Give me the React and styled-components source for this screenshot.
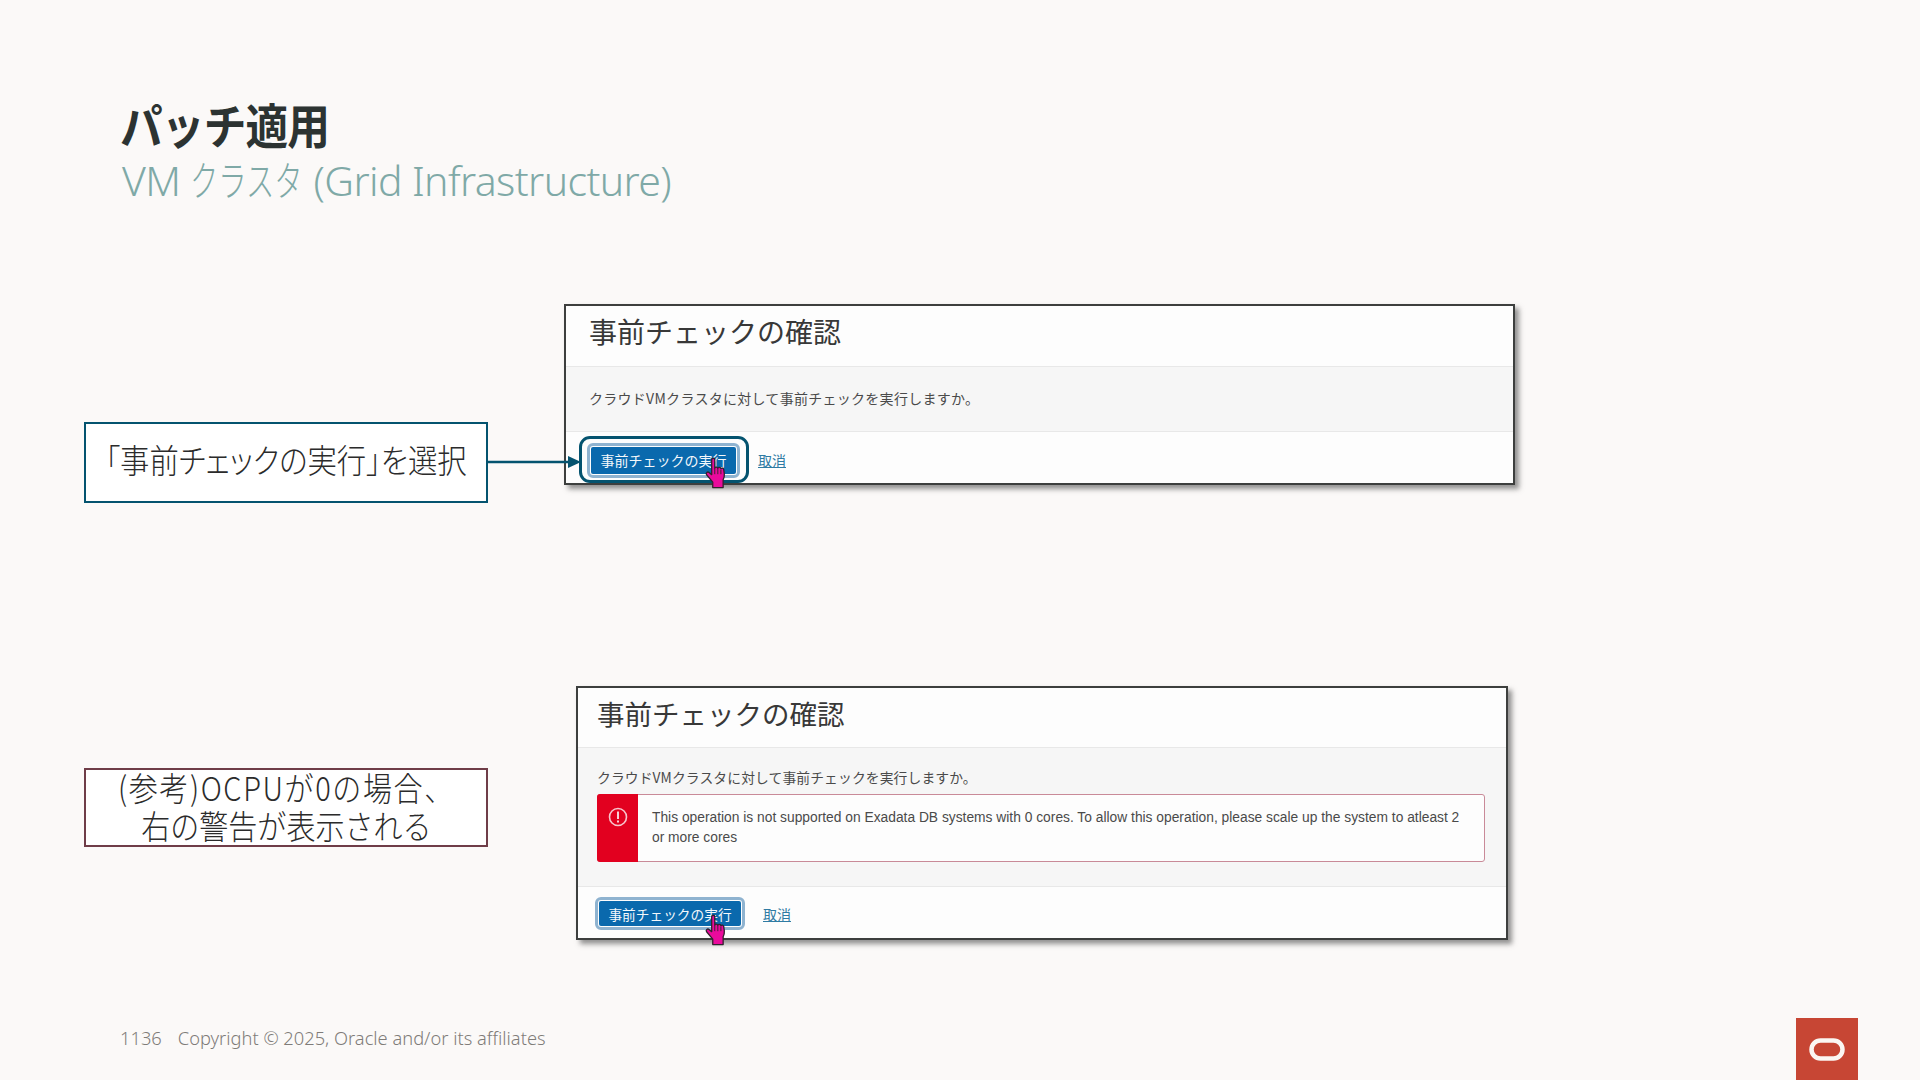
import React from "react";
import styled, { createGlobalStyle } from "styled-components";

const GlobalStyle = createGlobalStyle`
  html, body {
    margin: 0;
    padding: 0;
    background: #fbf9f8;
  }
`;

const Slide = styled.div`
  width: 1920px;
  height: 1080px;
  box-sizing: border-box;
  padding: 93px 0 0 84px;
  position: relative;
  overflow: hidden;
  display: flex;
  flex-direction: column;
  background: #fbf9f8;
  font-family: "Noto Sans", "Noto Sans CJK JP", sans-serif;
`;

const Header = styled.header`
  padding-left: 36px;
  height: 211px;
`;

const Title = styled.h1`
  margin: 0;
  font-family: "Noto Sans CJK JP", sans-serif;
  font-size: 48px;
  line-height: 60px;
  font-weight: 700;
  letter-spacing: -1px;
  color: #2c3332;
  white-space: nowrap;
  transform: scaleX(0.89);
  transform-origin: left center;
`;

const Subtitle = styled.h2`
  margin: 0 0 0 2px;
  font-family: "Noto Sans", "Noto Sans CJK JP", sans-serif;
  font-size: 41px;
  line-height: 50px;
  font-weight: 300;
  letter-spacing: -0.6px;
  color: #7fa9a7;
`;

const NarrowKana = styled.span`
  display: inline-block;
  width: 113px;
  font-family: "Noto Sans CJK JP", sans-serif;
  font-size: 41px;
  letter-spacing: 0;
  white-space: nowrap;
  transform: scaleX(0.69);
  transform-origin: left center;
`;

const Row = styled.section`
  display: grid;
  grid-template-columns: 404px ${(p) => p.$dialogWidth}px;
  column-gap: ${(p) => p.$gap}px;
  align-items: start;
  margin-bottom: ${(p) => p.$after}px;
`;

const Callout = styled.div`
  position: relative;
  box-sizing: border-box;
  height: ${(p) => p.$height}px;
  margin-top: ${(p) => p.$top}px;
  display: flex;
  align-items: center;
  justify-content: center;
  text-align: center;
  background: #ffffff;
  border: 2px solid ${(p) => p.$color};
`;

const CalloutText = styled.span`
  display: block;
  white-space: nowrap;
  font-family: "Noto Sans CJK JP", sans-serif;
  font-feature-settings: ${(p) => (p.$tight ? '"palt"' : "normal")};
  font-size: 33px;
  line-height: 38px;
  font-weight: 300;
  color: #2b2b2b;
  margin-bottom: ${(p) => p.$lift}px;
  transform: scaleX(${(p) => p.$scale});
`;

const WideLine = styled.span`
  letter-spacing: 1.8px;
`;

const Arrow = styled.svg`
  position: absolute;
  left: 100%;
  top: 50%;
  margin-top: -9px;
  display: block;
`;

const Dialog = styled.div`
  box-sizing: border-box;
  display: flex;
  flex-direction: column;
  height: ${(p) => p.$height}px;
  background: #fdfdfd;
  border: 2px solid #3d3f3e;
  box-shadow: 4px 4px 5px rgba(60, 60, 60, 0.55);
`;

const DialogHead = styled.div`
  box-sizing: border-box;
  height: ${(p) => p.$height}px;
  padding: 0 0 10px ${(p) => p.$inset}px;
  display: flex;
  align-items: center;
  font-family: "Noto Sans CJK JP", sans-serif;
  font-size: ${(p) => p.$size}px;
  color: #383838;
  border-bottom: 1px solid #e8e8e8;
`;

const DialogBody = styled.div`
  box-sizing: border-box;
  flex: 1;
  padding: ${(p) => p.$pad}px ${(p) => p.$inset + 2}px 0 ${(p) => p.$inset}px;
  background: #f6f6f6;
  font-family: "Noto Sans CJK JP", sans-serif;
  font-size: ${(p) => p.$size}px;
  line-height: 20px;
  color: #4a4a4a;
  letter-spacing: ${(p) => p.$spacing}px;
`;

const DialogFoot = styled.div`
  box-sizing: border-box;
  height: ${(p) => p.$height}px;
  padding: ${(p) => p.$top}px 0 0 ${(p) => p.$inset}px;
  border-top: 1px solid #e8e8e8;
  display: flex;
  align-items: center;
  gap: 20px;
`;

const ButtonWrap = styled.div`
  position: relative;
  display: flex;
`;

const RunButton = styled.button`
  box-sizing: border-box;
  width: ${(p) => p.$width}px;
  height: ${(p) => p.$height}px;
  padding: 0;
  background: #0a69ad;
  border: 2px solid #fdfdfd;
  border-radius: 4px;
  outline: 3px solid #8fb3d0;
  outline-offset: -1px;
  font-family: "Noto Sans CJK JP", sans-serif;
  font-size: ${(p) => p.$size}px;
  color: #f4f8fb;
`;

const Ring = styled.div`
  position: absolute;
  left: -10px;
  right: -11px;
  top: -9px;
  bottom: -7px;
  border: 3px solid #04536f;
  border-radius: 11px;
`;

const Hand = styled.svg`
  position: absolute;
  left: ${(p) => p.$left}px;
  top: ${(p) => p.$top}px;
  display: block;
`;

const CancelLink = styled.a`
  font-family: "Noto Sans CJK JP", sans-serif;
  font-size: 14px;
  color: #2f7ba3;
  text-decoration: underline;
`;

const Alert = styled.div`
  display: flex;
  box-sizing: border-box;
  height: 68px;
  margin-top: 7px;
  background: #fdfdfd;
  border: 1px solid #c98a98;
  border-radius: 3px;
`;

const AlertBand = styled.div`
  width: 41px;
  flex: none;
  margin: -1px 0 -1px -1px;
  background: #e2001f;
  border-radius: 3px 0 0 3px;
  display: flex;
  justify-content: center;
  padding-top: 13px;
  box-sizing: border-box;
`;

const AlertText = styled.div`
  padding: 13px 20px 0 14px;
  font-family: "Liberation Sans", Arial, sans-serif;
  font-size: 13.8px;
  line-height: 20px;
  letter-spacing: 0;
  color: #4a4a4a;
`;

const Footer = styled.footer`
  position: absolute;
  left: 120px;
  bottom: 30px;
  display: flex;
  gap: 16px;
  font-family: "Noto Sans", sans-serif;
  font-size: 18.3px;
  font-weight: 300;
  line-height: 24px;
  color: #7f7c79;
`;

const Logo = styled.div`
  position: absolute;
  right: 62px;
  bottom: 0;
  width: 62px;
  height: 62px;
  background: #c74634;
  display: flex;
  justify-content: center;
  padding-top: 20px;
  box-sizing: border-box;
`;

const HandIcon = ({ left, top }) => (
  <Hand $left={left} $top={top} width="26" height="32" viewBox="0 0 22 27">
    <path
      d="M6.500 2.200c0-1.600 2.600-1.600 2.600 0v7.200c.3-1.300 2.500-1.200 2.600.2.400-1.200 2.400-1 2.600.4.500-1 2.300-.7 2.400.7l.5 3.600c.2 2-.4 3.600-1 5v6.500H7.400v-4.600L2.200 15c-1-1.500.7-3 2.100-2l2.200 1.900z"
      fill="#ea0a9c"
      stroke="#33222e"
      strokeWidth="1.100"
      strokeLinejoin="round"
    />
    <path d="M9.100 9.500v5M11.700 10v4.500M14.300 11v3.500" stroke="#33222e" strokeWidth="0.800" />
  </Hand>
);

const ConfirmDialog = ({ head, foot, footTop, titleSize, bodySize, spacing, inset, pad, height, btnW, btnH, btnSize, hand, ring, children }) => (
  <Dialog $height={height}>
    <DialogHead $height={head} $inset={inset} $size={titleSize}>
      事前チェックの確認
    </DialogHead>
    <DialogBody $inset={inset} $pad={pad} $size={bodySize} $spacing={spacing}>
      クラウドVMクラスタに対して事前チェックを実行しますか。
      {children}
    </DialogBody>
    <DialogFoot $height={foot} $inset={inset} $top={footTop}>
      <ButtonWrap>
        <RunButton $width={btnW} $height={btnH} $size={btnSize}>
          事前チェックの実行
        </RunButton>
        {ring && <Ring />}
        <HandIcon left={hand[0]} top={hand[1]} />
      </ButtonWrap>
      <CancelLink>取消</CancelLink>
    </DialogFoot>
  </Dialog>
);

export default function App() {
  return (
    <Slide>
      <GlobalStyle />
      <Header>
        <Title>パッチ適用</Title>
        <Subtitle>
          VM <NarrowKana>クラスタ</NarrowKana> (Grid Infrastructure)
        </Subtitle>
      </Header>

      <Row $dialogWidth={951} $gap={76} $after={183}>
        <Callout $height={81} $top={118} $color="#04536f">
          <CalloutText $scale={0.89} $lift={7} $tight>
            「事前チェックの実行」を選択
          </CalloutText>
          <Arrow width="95" height="16" viewBox="0 0 95 16">
            <line x1="0" y1="8" x2="84" y2="8" stroke="#04536f" strokeWidth="2.500" />
            <polygon points="82,2 95,8 82,14" fill="#04536f" />
          </Arrow>
        </Callout>
        <ConfirmDialog
          height={181}
          head={61}
          foot={52}
          footTop={5}
          titleSize={28}
          bodySize={14}
          spacing={0.28}
          inset={23}
          pad={21}
          btnW={149}
          btnH={31}
          btnSize={14}
          hand={[115, 12]}
          ring
        />
      </Row>

      <Row $dialogWidth={932} $gap={88} $after={0}>
        <Callout $height={79} $top={82} $color="#6f3d48">
          <CalloutText $scale={0.88} $lift={4}>
            <WideLine>(参考)OCPUが0の場合、</WideLine>
            <br />
            右の警告が表示される
          </CalloutText>
        </Callout>
        <ConfirmDialog
          height={254}
          head={60}
          foot={52}
          footTop={2}
          titleSize={27.5}
          bodySize={13.8}
          spacing={0.1}
          inset={19}
          pad={19}
          btnW={146}
          btnH={29}
          btnSize={13.7}
          hand={[107, 15]}
        >
          <Alert>
            <AlertBand>
              <svg width="20" height="20" viewBox="0 0 20 20">
                <circle cx="10" cy="10" r="8.500" fill="none" stroke="#f7c4cc" strokeWidth="1.600" />
                <rect x="9" y="4.500" width="2" height="7.500" fill="#f7d0d6" />
                <rect x="9" y="13.500" width="2" height="2" fill="#f7d0d6" />
              </svg>
            </AlertBand>
            <AlertText>
              This operation is not supported on Exadata DB systems with 0 cores. To allow this operation, please scale up the system to atleast 2 or more cores
            </AlertText>
          </Alert>
        </ConfirmDialog>
      </Row>

      <Footer>
        <span>1136</span>
        <span>Copyright © 2025, Oracle and/or its affiliates</span>
      </Footer>
      <Logo>
        <svg width="36" height="24" viewBox="0 0 36 24">
          <rect x="2.500" y="2.500" width="31" height="18" rx="9" fill="none" stroke="#fbf6f2" strokeWidth="4.500" />
        </svg>
      </Logo>
    </Slide>
  );
}
